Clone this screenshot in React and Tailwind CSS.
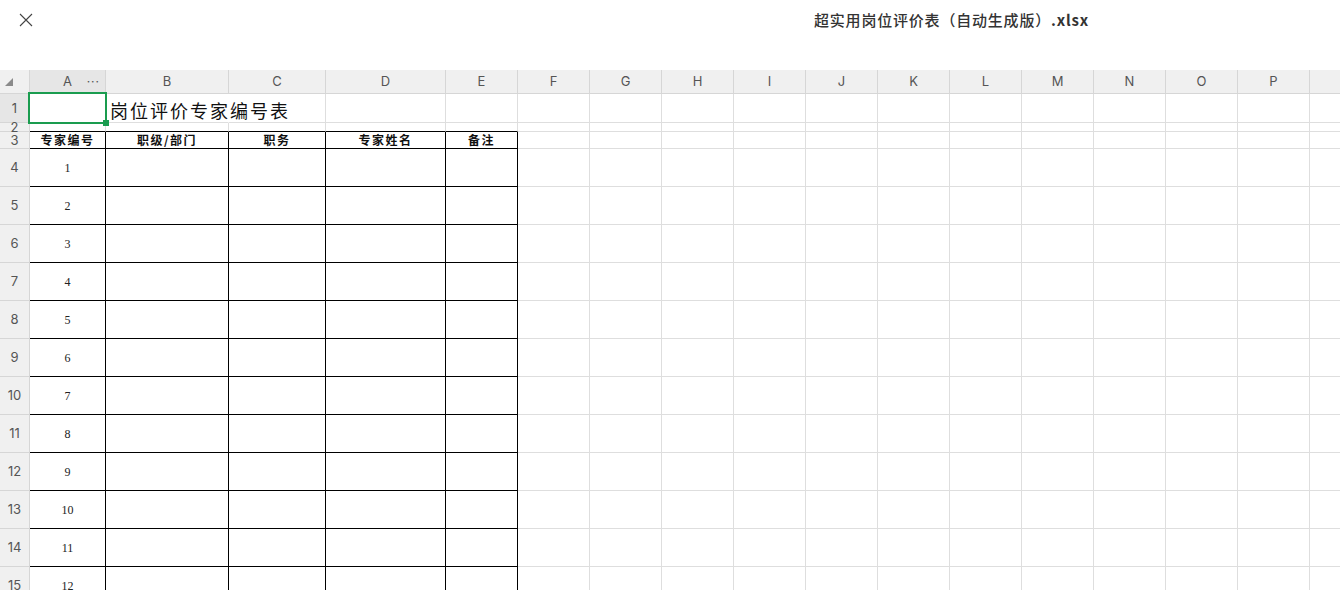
const colWidths = { A: 76, B: 123, C: 97, D: 120, E: 72 };
const letters = "ABCDEFGHIJKLMNOPQ".split("");
const columns = letters.map((k) => ({ key: k, width: colWidths[k] || 72 }));

const rows = [
  { n: 1, h: 29 },
  { n: 2, h: 9 },
  { n: 3, h: 17 },
  ...Array.from({ length: 12 }, (_, i) => ({ n: i + 4, h: 38 })),
];

const headers = ["专家编号", "职级/部门", "职务", "专家姓名", "备注"];

function CornerIcon() {
  return (
    <svg width="8" height="8" viewBox="0 0 8 8" className="block">
      <path d="M8 0 L8 8 L0 8 Z" fill="#8a8a8a" />
    </svg>
  );
}

function CloseIcon() {
  return (
    <svg width="14" height="14" viewBox="0 0 14 14" className="block">
      <path d="M1 1 L13 13 M13 1 L1 13" stroke="#444" strokeWidth="1.1" />
    </svg>
  );
}

function Cell({ row, colIndex, width }) {
  const inTable = colIndex < 5 && row.n >= 3;
  const blackBottom = colIndex < 5 && row.n >= 2;
  const blackRight = inTable;
  const hideRight = row.n === 1 && colIndex === 1;

  let content = null;
  if (row.n === 1 && colIndex === 1) {
    content = (
      <span className="absolute left-[4px] top-[4px] whitespace-nowrap text-[18px] font-normal leading-[24px] tracking-[2px] text-[#111] font-['Noto_Sans_CJK_SC',sans-serif]">
        岗位评价专家编号表
      </span>
    );
  } else if (row.n === 3 && colIndex < 5) {
    content = (
      <span className="flex h-full items-center justify-center text-[12px] font-bold leading-none tracking-[1.5px] text-[#111] font-['Noto_Sans_CJK_SC',sans-serif]">
        {headers[colIndex]}
      </span>
    );
  } else if (row.n >= 4 && colIndex === 0) {
    content = (
      <span className="flex h-full items-center justify-center text-[12px] text-[#222] font-['Liberation_Serif',serif]">
        {row.n - 3}
      </span>
    );
  }

  return (
    <div
      className={`relative shrink-0 overflow-visible border-b border-r ${
        blackBottom ? "border-b-black" : "border-b-[#dedede]"
      } ${
        hideRight
          ? "border-r-transparent"
          : blackRight
          ? "border-r-black"
          : "border-r-[#dedede]"
      }`}
      style={{ width, height: row.h }}
    >
      {content}
    </div>
  );
}

export default function App() {
  return (
    <div className="h-[590px] w-[1340px] overflow-hidden bg-white font-['Inter',sans-serif]">
      <div className="flex h-[70px] items-start">
        <button className="ml-[19px] mt-[13px]">
          <CloseIcon />
        </button>
        <div className="ml-[781px] mt-[9px] text-[15px] font-medium leading-[22px] tracking-[0.8px] text-[#333] font-['Noto_Sans_CJK_SC',sans-serif]">
          超实用岗位评价表（自动生成版）<span className="font-bold">.xlsx</span>
        </div>
      </div>

      <div className="relative">
        <div className="flex h-[24px] border-b border-[#d6d6d6] bg-[#f0f0f0]">
          <div className="flex w-[30px] shrink-0 items-center pl-[5px] border-r border-[#d6d6d6]">
            <CornerIcon />
          </div>
          {columns.map((c, i) => (
            <div
              key={c.key}
              className={`relative flex shrink-0 items-center justify-center border-r border-[#d6d6d6] text-[13px] text-[#555] ${
                i === 0 ? "bg-[#e6e6e6]" : ""
              }`}
              style={{ width: c.width }}
            >
              {c.key}
              {i === 0 && (
                <span className="absolute right-[5px] top-[3px] text-[12px] tracking-[1px] text-[#555]">
                  ···
                </span>
              )}
            </div>
          ))}
        </div>

        {rows.map((row) => (
          <div key={row.n} className="flex">
            <div
              className={`flex w-[30px] shrink-0 items-center justify-center border-b border-r border-[#d6d6d6] text-[13px] leading-none text-[#555] ${
                row.n === 1 ? "bg-[#e6e6e6]" : "bg-[#f0f0f0]"
              }`}
              style={{ height: row.h }}
            >
              {row.n}
            </div>
            {columns.map((c, i) => (
              <Cell key={c.key} row={row} colIndex={i} width={c.width} />
            ))}
          </div>
        ))}

        <div className="pointer-events-none absolute left-[28px] top-[22px] h-[32px] w-[79px] border-2 border-[#1a9c4f]">
          <div className="absolute -bottom-[4px] -right-[4px] h-[6px] w-[6px] bg-[#1a9c4f]" />
        </div>
      </div>
    </div>
  );
}
